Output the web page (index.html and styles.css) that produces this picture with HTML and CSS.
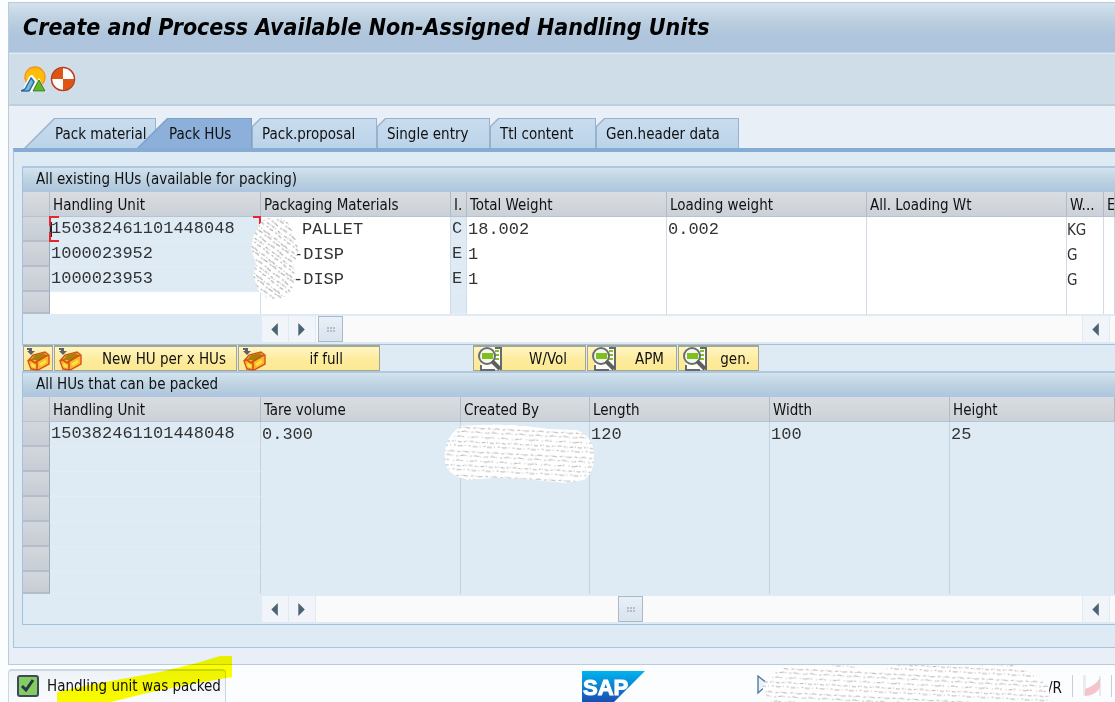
FILE: index.html
```
<!DOCTYPE html>
<html lang="en">
<head>
<meta charset="utf-8">
<title>Create and Process Available Non-Assigned Handling Units</title>
<link rel="stylesheet" href="styles.css">
</head>
<body>
<svg class="defs" aria-hidden="true">
  <defs>
    <pattern id="scratch" width="44" height="24" patternUnits="userSpaceOnUse" patternTransform="rotate(3)">
      <g fill="none" stroke="#b4b4b4" stroke-width="1">
        <path d="M0 2l5 1 4-1 6 1 5-1 7 1 6-1 5 1 6-1" stroke-dasharray="3 2 1 1 5 3"/>
        <path d="M0 7l6-1 5 1 6 0 4-1 6 1 6-1 5 1 6 0" stroke-dasharray="2 2 5 1 1 3"/>
        <path d="M0 12l4-1 7 1 5-1 6 1 5 0 7-1 10 1" stroke-dasharray="4 1 2 4 1 2"/>
        <path d="M0 16l5 1 7-1 6 1 6-1 6 0 7 1 7-1" stroke-dasharray="1 2 4 2 2 1"/>
        <path d="M0 21l6 0 5-1 6 1 7-1 6 1 6 0 8-1" stroke-dasharray="5 2 1 3 2 2"/>
      </g>
    </pattern>
    <pattern id="scratch-steep" width="22" height="20" patternUnits="userSpaceOnUse" patternTransform="rotate(38)">
      <g fill="none" stroke="#a0a0a0" stroke-width="1">
        <path d="M0 2l6 1 5-1 11 1" stroke-dasharray="4 2 1 2"/>
        <path d="M0 6l5-1 7 1 10-1" stroke-dasharray="2 1 5 3"/>
        <path d="M0 10l7 1 6-1 9 0" stroke-dasharray="5 3 2 1"/>
        <path d="M0 14l5 0 6 1 11-1" stroke-dasharray="3 1 1 3"/>
        <path d="M0 18l6-1 8 1 8-1" stroke-dasharray="4 3 2 2"/>
      </g>
    </pattern>
    <linearGradient id="sap-blue" x1="0" y1="0" x2="0" y2="1">
      <stop offset="0" stop-color="#00b4ee"/><stop offset="1" stop-color="#1b4db3"/>
    </linearGradient>
    <symbol id="i-box" viewBox="0 0 24 24">
      <path d="M2 14L7 8l12-3 4 3v9l-11 6-7-1z" fill="#fdb827" stroke="#d4501c" stroke-width="1.4"/>
      <path d="M5 13l4-5 9-2 3 3-9 6-1-2z" fill="#a8810c"/>
      <path d="M2 14l3-1 4 3 2-2 11-6M11 15v8" fill="none" stroke="#d4501c" stroke-width="1.6"/>
      <path d="M5 17l4 3M14 18l6-4" stroke="#ffe04a" stroke-width="3"/>
      <path d="M1 1h5v3h3l-4 4-4-4h2V3H1z" fill="#5d6268"/>
    </symbol>
    <symbol id="i-lens" viewBox="0 0 26 24">
      <path d="M4 0h21v23H4z" fill="#fffef5"/>
      <path d="M18 1h6v22M4 18v5h14" fill="none" stroke="#666a70" stroke-width="2"/>
      <path d="M18 4h4M18 8h4M18 12h4" stroke="#7fc12a" stroke-width="2"/>
      <circle cx="10" cy="9" r="8" fill="#f5f8ee" stroke="#6a6d73" stroke-width="2"/>
      <path d="M5 6h11v6H5z" fill="#7fc01e"/>
      <path d="M15 14l8 8" stroke="#5d5e62" stroke-width="4"/>
    </symbol>
  </defs>
</svg>

<main class="window">
  <header class="titlebar"><h1>Create and Process Available Non-Assigned Handling Units</h1></header>

  <div class="toolbar">
    <button class="tool" aria-label="Overview">
      <svg viewBox="0 0 26 26" width="26" height="26">
        <circle cx="15" cy="11" r="10" fill="#ffbd0a" stroke="#f5961d" stroke-width="1.4"/>
        <path d="M0 26l4-3 6-12 2-1 4 5-5 11z" fill="#81b9dc" stroke="#fff" stroke-width="2"/>
        <path d="M1 25l4-2 6-11 3 4-5 9z" fill="#7eb6da" stroke="#256f9d" stroke-width="1.4"/>
        <path d="M12 26l7-14 7 14z" fill="#fff"/><path d="M13 25l6-11 6 11z" fill="#66b32d" stroke="#2d7f2b"/>
      </svg>
    </button>
    <button class="tool" aria-label="Header">
      <svg viewBox="0 0 26 26" width="26" height="26">
        <circle cx="13" cy="13" r="11" fill="#fff"/>
        <path d="M13 13V2a11 11 0 0 0-11 11zM13 13v11a11 11 0 0 0 11-11z" fill="#dd5413"/>
        <circle cx="13" cy="13" r="11.5" fill="none" stroke="#bc3d14" stroke-width="1.5"/>
      </svg>
    </button>
  </div>

  <div class="content">
    <nav class="tabs" role="tablist">
      <button class="tab tab-first" role="tab">Pack material</button>
      <button class="tab tab-active" role="tab" aria-selected="true">Pack HUs</button>
      <button class="tab tab-proposal" role="tab">Pack.proposal</button>
      <button class="tab tab-single" role="tab">Single entry</button>
      <button class="tab tab-total" role="tab">Ttl content</button>
      <button class="tab tab-header" role="tab">Gen.header data</button>
    </nav>

    <div class="tabpanel" role="tabpanel">
      <section class="panel">
        <h2>All existing HUs (available for packing)</h2>
        <table class="grid">
          <colgroup><col class="c-sel"><col class="c-hu"><col class="c-pm"><col class="c-i"><col class="c-wt"><col class="c-wt"><col class="c-wt"><col class="c-unit"><col></colgroup>
          <thead><tr><th></th><th>Handling Unit</th><th>Packaging Materials</th><th>I.</th><th>Total Weight</th><th>Loading weight</th><th>All. Loading Wt</th><th>W...</th><th>E</th></tr></thead>
          <tbody>
            <tr><td class="sel"></td><td class="key focused">150382461101448048<i class="corner"></i></td>
              <td class="material">PALLET
                <svg class="scribble scribble-material" viewBox="0 0 48 83" aria-hidden="true">
                  <path d="M12 2Q25-2 36 4L43 17Q48 26 47 35L43 47 44 67Q39 80 27 82 12 83 7 72L2 58 5 47 0 32 3 17z" fill="#fff"/>
                  <path d="M12 2Q25-2 36 4L43 17Q48 26 47 35L43 47 44 67Q39 80 27 82 12 83 7 72L2 58 5 47 0 32 3 17z" fill="url(#scratch-steep)"/>
                </svg></td>
              <td class="key">C</td><td>18.002</td><td>0.002</td><td></td><td class="unit">KG</td><td></td></tr>
            <tr><td class="sel"></td><td class="key">1000023952</td><td class="material dash">-DISP</td><td class="key">E</td><td>1</td><td></td><td></td><td class="unit">G</td><td></td></tr>
            <tr><td class="sel"></td><td class="key">1000023953</td><td class="material dash">-DISP</td><td class="key">E</td><td>1</td><td></td><td></td><td class="unit">G</td><td></td></tr>
            <tr><td class="sel"></td><td></td><td></td><td class="key"></td><td></td><td></td><td></td><td></td><td></td></tr>
          </tbody>
        </table>
        <div class="scrollbar">
          <button class="arrow" aria-label="Scroll left"><svg viewBox="0 0 8 14"><path d="M7 0v14L0 7z"/></svg></button>
          <button class="arrow" aria-label="Scroll right"><svg viewBox="0 0 8 14"><path d="M0 0v14l7-7z"/></svg></button>
          <div class="track"><span class="thumb"></span></div>
          <button class="arrow" aria-label="Scroll left"><svg viewBox="0 0 8 14"><path d="M7 0v14L0 7z"/></svg></button>
          <span class="track-end"></span>
        </div>
      </section>

      <div class="actions">
        <button class="act act-new" aria-label="New HU"><svg class="box"><use href="#i-box"/></svg></button>
        <button class="act act-per"><svg class="box"><use href="#i-box"/></svg><span>New HU per x HUs</span></button>
        <button class="act act-full"><svg class="box"><use href="#i-box"/></svg><span>if full</span></button>
        <button class="act act-vol"><svg class="lens"><use href="#i-lens"/></svg><span>W/Vol</span></button>
        <button class="act act-apm"><svg class="lens"><use href="#i-lens"/></svg><span>APM</span></button>
        <button class="act act-gen"><svg class="lens"><use href="#i-lens"/></svg><span>gen.</span></button>
      </div>

      <section class="panel">
        <h2>All HUs that can be packed</h2>
        <table class="grid grid-packed">
          <colgroup><col class="c-sel"><col class="c-hu"><col class="c-wt"><col class="c-by"><col class="c-dim"><col class="c-dim"><col></colgroup>
          <thead><tr><th></th><th>Handling Unit</th><th>Tare volume</th><th>Created By</th><th>Length</th><th>Width</th><th>Height</th></tr></thead>
          <tbody>
            <tr><td class="sel"></td><td class="key">150382461101448048</td><td>0.300</td>
              <td class="by"><svg class="scribble scribble-by" viewBox="0 0 151 60" aria-hidden="true">
                  <path d="M17 2Q50-1 81 2L105 5 133 6Q149 12 150 30 151 49 140 56L121 59 80 55 52 54 22 56Q4 51 1 39-2 14 17 2z" fill="#fff"/>
                  <path d="M17 2Q50-1 81 2L105 5 133 6Q149 12 150 30 151 49 140 56L121 59 80 55 52 54 22 56Q4 51 1 39-2 14 17 2z" fill="url(#scratch)"/>
                </svg></td>
              <td>120</td><td>100</td><td>25</td></tr>
            <tr><td class="sel"></td><td class="key"></td><td></td><td></td><td></td><td></td><td></td></tr>
            <tr><td class="sel"></td><td class="key"></td><td></td><td></td><td></td><td></td><td></td></tr>
            <tr><td class="sel"></td><td class="key"></td><td></td><td></td><td></td><td></td><td></td></tr>
            <tr><td class="sel"></td><td class="key"></td><td></td><td></td><td></td><td></td><td></td></tr>
            <tr><td class="sel"></td><td class="key"></td><td></td><td></td><td></td><td></td><td></td></tr>
            <tr><td class="sel"></td><td class="key"></td><td></td><td></td><td></td><td></td><td></td></tr>
          </tbody>
        </table>
        <div class="scrollbar">
          <button class="arrow" aria-label="Scroll left"><svg viewBox="0 0 8 14"><path d="M7 0v14L0 7z"/></svg></button>
          <button class="arrow" aria-label="Scroll right"><svg viewBox="0 0 8 14"><path d="M0 0v14l7-7z"/></svg></button>
          <div class="track"><span class="thumb thumb-mid"></span></div>
          <button class="arrow" aria-label="Scroll left"><svg viewBox="0 0 8 14"><path d="M7 0v14L0 7z"/></svg></button>
          <span class="track-end"></span>
        </div>
      </section>
    </div>
  </div>
</main>

<footer class="statusbar">
  <div class="message" role="status">
    <svg viewBox="0 0 22 22" width="22" height="22" aria-hidden="true">
      <rect x="1" y="1" width="20" height="20" rx="2" fill="#84cb62" stroke="#3e4a55" stroke-width="2"/>
      <path d="M5 11l4 4 7-10" fill="none" stroke="#273744" stroke-width="3"/>
    </svg>
    <span>Handling unit was packed</span>
    <svg class="marker" viewBox="0 0 175 47" aria-hidden="true"><path d="M0 47V36L27 30 103 16 140 7 163 0H175V21L130 29 90 37 50 47z" fill="#ffff00"/></svg>
  </div>
  <svg class="sap" viewBox="0 0 64 32" role="img" aria-label="SAP">
    <path d="M0 0h63L32 31H0z" fill="url(#sap-blue)"/>
    <text x="1" y="24" class="sap-text">SAP</text>
  </svg>
  <div class="session">
    <svg class="expand" viewBox="0 0 12 20" aria-hidden="true"><path d="M1 1v17l10-9z" fill="#eaf2f8" stroke="#4b7ca5" stroke-width="1.4"/></svg>
    <svg class="scribble scribble-session" viewBox="0 0 288 38" aria-hidden="true">
      <path d="M22 3L82 0 117 6 135 0H250L274 10 287 22 288 38H8L0 22 8 9z" fill="#fff"/>
      <path d="M22 3L82 0 117 6 135 0H250L274 10 287 22 288 38H8L0 22 8 9z" fill="url(#scratch)"/>
    </svg>
    <span class="mode">/R</span>
    <span class="divider"></span>
    <svg class="flag" viewBox="0 0 18 22" aria-hidden="true"><path d="M0 0h3v21H0z" fill="#ececef"/><path d="M2 14Q12 11 17 3v10Q11 21 2 21z" fill="#f5c3ca"/><path d="M17 1v20" stroke="#d5d5da"/></svg>
    <span class="divider"></span>
  </div>
</footer>
</body>
</html>
```
FILE: styles.css
```
* { box-sizing: border-box; }
body {
  margin: 0;
  padding: 2px 0 0 8px;
  overflow: hidden;
  background: #fcfdfe;
  color: #111;
  font: 15px/20px "DejaVu Sans Condensed", "DejaVu Sans", sans-serif;
}
button { font: inherit; color: inherit; padding: 0; border: 0; background: none; }
h1, h2 { margin: 0; }
.defs { position: absolute; width: 0; height: 0; }

.window { border: 1px solid #bccbdb; border-right: 0; background: #e9eff7; }
.titlebar {
  height: 50px;
  padding: 8px 14px;
  background: linear-gradient(#d3e2ee, #bdd0e0 35%, #aec5dc 65%, #adc4dd);
  border-bottom: 1px solid #c2d2e2;
}
h1 { font-size: 23px; line-height: 32px; font-style: italic; font-weight: bold; color: #000; white-space: nowrap; }
.toolbar {
  display: flex;
  gap: 4px;
  height: 53px;
  padding: 12px 11px;
  background: #cfdde8;
  border-top: 1px solid #e4edf5;
  border-bottom: 2px solid #bdcedc;
}
.tool { width: 26px; height: 26px; }
.tool svg { display: block; }

.content { padding: 12px 0 16px 4px; }
.tabs { display: flex; height: 30px; padding-left: 11px; }
.tab {
  --cut: 8px;
  --fill: linear-gradient(#c8dcee, #bbd3e9);
  position: relative;
  isolation: isolate;
  flex: none;
  height: 30px;
  padding: 2px 0 0 10px;
  text-align: left;
  white-space: nowrap;
  background: #96b2cc;
  clip-path: polygon(0 var(--cut), var(--cut) 0, 100% 0, 100% 100%, 0 100%);
}
.tab::before {
  content: "";
  position: absolute;
  z-index: -1;
  inset: 1px 1px 0 1px;
  background: var(--fill);
  clip-path: polygon(0 var(--cut), var(--cut) 0, 100% 0, 100% 100%, 0 100%);
}
.tab-first { --cut: 30px; width: 132px; padding-left: 31px; }
.tab-active { --cut: 30px; --fill: #8cb0da; width: 115px; margin-left: -19px; padding-left: 32px; background: #7c9fc6; }
.tab-proposal { width: 125px; }
.tab-single { width: 113px; }
.tab-total { width: 106px; }
.tab-header { width: 143px; }

.tabpanel {
  padding: 14px 0 22px 8px;
  background: #deebf5;
  border: 1px solid #a9c4df;
  border-top: 4px solid #86acd4;
  border-right: 0;
}
.panel { border: 1px solid #a3c0dc; border-top: 2px solid #b0c8dd; border-right: 0; }
.panel h2 {
  height: 24px;
  padding-left: 13px;
  font-size: 15px;
  font-weight: normal;
  line-height: 22px;
  background: linear-gradient(#d3e3ef, #bdd2e1 50%, #adc5de);
}

.grid { width: 100%; table-layout: fixed; border-collapse: separate; border-spacing: 0; }
.c-sel { width: 27px; }
.c-hu { width: 211px; }
.c-pm { width: 190px; }
.c-i { width: 16px; }
.c-wt { width: 200px; }
.c-unit { width: 37px; }
.c-by { width: 129px; }
.c-dim { width: 180px; }
.grid th {
  height: 25px;
  padding: 2px 0 0 3px;
  font-weight: normal;
  text-align: left;
  white-space: nowrap;
  overflow: hidden;
  background: linear-gradient(#d9dde1, #cbd1d8);
  border-right: 1px solid #b1bbc7;
  border-bottom: 1px solid #b9c3d0;
}
.grid td {
  height: 25px;
  padding: 0 0 0 1px;
  font: 17px/20px "Liberation Mono", monospace;
  color: #333;
  white-space: nowrap;
  background: #fff;
  border-right: 1px solid #d0dbe6;
}
.grid tr:last-child td { height: 22px; }
.grid td.key { background-color: #deebf5; border-bottom: 1px solid #e6ecf2; }
.grid td.sel {
  background: linear-gradient(#d3d7dd, #c7cdd5);
  border-right: 1px solid #9fabb9;
  border-bottom: 2px solid #b4bdc8;
}
.grid-packed td { background: #deebf5; border-color: #c3d2df; }
.grid td.unit { font: 15px/20px "DejaVu Sans Condensed", "DejaVu Sans", sans-serif; padding: 0; }
.grid td.material { position: relative; padding-left: 41px; }
.grid td.dash { padding-left: 32px; }
.grid td.by { position: relative; }

.grid td.focused { position: relative; background: linear-gradient(#222, #222) 0 5px / 2px 15px no-repeat #deebf5; }
.focused::before, .focused::after, .corner {
  content: "";
  position: absolute;
  width: 8px;
  height: 8px;
  border: 0 solid #e8252b;
}
.focused::before { left: -1px; top: -1px; border-width: 2px 0 0 2px; }
.focused::after { left: -1px; bottom: -1px; border-width: 0 0 2px 2px; }
.corner { right: -1px; top: -1px; border-width: 2px 2px 0 0; }

.scribble { position: absolute; z-index: 2; }
.scribble-material { left: -10px; top: 0; width: 48px; height: 83px; }
.scribble-by { left: -17px; top: 2px; width: 151px; height: 60px; }

.scrollbar { display: flex; gap: 1px; height: 30px; padding: 2px 0 2px 239px; }
.arrow { flex: none; width: 26px; height: 26px; background: #f1f5fa; }
.arrow svg { display: block; width: 8px; height: 13px; margin: auto; fill: #4b6373; }
.track { flex: 1; background: #fafafb; padding-left: 2px; }
.track-end { width: 5px; background: #fafafb; }
.thumb {
  display: block;
  width: 25px;
  height: 26px;
  border: 1px solid #a9b9c9;
  background:
    conic-gradient(#b3bec9 0 0) 8px 10px / 2px 2px no-repeat,
    conic-gradient(#b3bec9 0 0) 11px 10px / 2px 2px no-repeat,
    conic-gradient(#b3bec9 0 0) 14px 10px / 2px 2px no-repeat,
    conic-gradient(#b3bec9 0 0) 8px 13px / 2px 2px no-repeat,
    conic-gradient(#b3bec9 0 0) 11px 13px / 2px 2px no-repeat,
    conic-gradient(#b3bec9 0 0) 14px 13px / 2px 2px no-repeat,
    linear-gradient(#e8eff7, #d9e4ef);
}
.thumb-mid { margin-left: 300px; }

.actions { display: flex; gap: 1px; height: 26px; padding-left: 1px; }
.act {
  display: flex;
  align-items: center;
  height: 26px;
  padding: 0 10px 0 3px;
  white-space: nowrap;
  background: linear-gradient(#fff5c2, #fdeb9b 60%, #fce995);
  border: 1px solid #a6a68e;
  border-top-width: 2px;
}
.act span { margin-left: auto; }
.box { flex: none; width: 24px; height: 24px; }
.lens { flex: none; width: 26px; height: 24px; }
.act-new { width: 30px; padding: 0 2px; }
.act-per { width: 183px; }
.act-full { width: 142px; padding-right: 36px; }
.act-vol { width: 113px; margin-left: 92px; padding-right: 18px; }
.act-apm { width: 90px; padding-right: 12px; }
.act-gen { width: 81px; padding-right: 8px; }

.statusbar { display: flex; height: 40px; padding-top: 4px; }
.message {
  position: relative;
  display: flex;
  gap: 8px;
  width: 218px;
  height: 40px;
  padding: 4px 0 0 8px;
  line-height: 22px;
  white-space: nowrap;
  border: 1px solid #cbd7e4;
  border-top-width: 2px;
  border-bottom: 0;
  border-radius: 4px 4px 0 0;
  background: linear-gradient(#eef3f8, #fcfdfe);
}
.marker { position: absolute; left: 48px; top: -15px; width: 175px; height: 47px; mix-blend-mode: multiply; }
.sap { flex: none; width: 64px; height: 32px; margin: 2px 0 0 356px; }
.sap-text { font: bold 22px "Liberation Sans", sans-serif; fill: #fff; stroke: #fff; stroke-width: 1px; }
.session { position: relative; display: flex; flex: 1; padding: 6px 3px 0 0; justify-content: flex-end; gap: 10px; }
.expand { position: absolute; left: 111px; top: 6px; width: 12px; height: 20px; }
.scribble-session { left: 116px; top: -4px; width: 288px; height: 38px; }
.mode { line-height: 26px; }
.divider { width: 1px; height: 22px; background: #c9ced6; }
.flag { width: 18px; height: 22px; }
```
